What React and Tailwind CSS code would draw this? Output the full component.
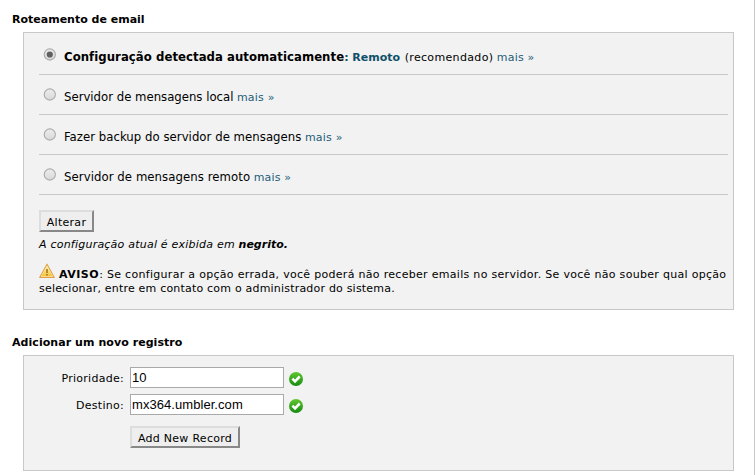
function Title({ children, className = "" }) {
  return <h2 className={`ml-3 h-[13px] text-[11px] leading-[13px] font-bold ${className}`}>{children}</h2>;
}

function Mais() {
  return (
    <a href="#" className="text-[11px] tracking-[0.2px] text-[#1d5d79]">mais »</a>
  );
}

function Radio({ checked }) {
  return (
    <svg width="13" height="13" viewBox="0 0 13 13" className="mt-[13px] mr-[7px] ml-[4px] shrink-0">
      <defs>
        <linearGradient id="radioFill" x1="0" y1="0" x2="0" y2="1">
          <stop offset="0" stopColor="#ececec" />
          <stop offset="1" stopColor="#d9d9d9" />
        </linearGradient>
      </defs>
      <circle cx="6.8" cy="6.5" r="5.6" fill="url(#radioFill)" stroke="#ababab" strokeWidth="1.1" />
      {checked && <circle cx="6.8" cy="6.5" r="3.1" fill="#606060" />}
    </svg>
  );
}

function Option({ checked, children }) {
  return (
    <label className="flex h-10 border-b border-[#c8c8c8]">
      <Radio checked={checked} />
      <span className="mt-[13px] ml-[1px] h-[18px] text-[11px] leading-[18px] whitespace-nowrap">{children}</span>
    </label>
  );
}

function OptionText({ children, className = "" }) {
  return <span className={`font-['DejaVu_Sans_Condensed','DejaVu_Sans',sans-serif] text-[13px] ${className}`}>{children}</span>;
}

function Btn({ children, className = "" }) {
  return (
    <button
      className={`block h-[22px] border-2 border-t-[#dddddd] border-r-[#888888] border-b-[#888888] border-l-[#dddddd] bg-[#eeeeee] pt-[3px] text-center text-[11px] leading-[15px] tracking-[0.28px] ${className}`}
    >
      {children}
    </button>
  );
}

function Warning() {
  return (
    <svg width="16" height="16" viewBox="0 0 16 16" className="mr-1 inline-block align-[-1px]">
      <defs>
        <linearGradient id="warnFill" x1="0" y1="0" x2="0" y2="1">
          <stop offset="0" stopColor="#fff0a0" />
          <stop offset="1" stopColor="#f3c33a" />
        </linearGradient>
      </defs>
      <path d="M8 1.2 15.3 14.4H.7Z" fill="#fff6cf" stroke="#dfa045" strokeWidth="1.1" strokeLinejoin="round" />
      <path d="M8 3.3 13.6 13.2H2.4Z" fill="url(#warnFill)" />
      <path d="M7.2 6h1.6v4H7.2zM7.2 11h1.6v1.4H7.2z" fill="#a8741c" />
    </svg>
  );
}

function Valid() {
  return (
    <svg width="14" height="14" viewBox="0 0 14 14" className="mt-[5px] ml-[5px] shrink-0">
      <defs>
        <linearGradient id="validFill" x1="0" y1="0" x2="0" y2="1">
          <stop offset="0" stopColor="#62c82e" />
          <stop offset="1" stopColor="#158a12" />
        </linearGradient>
      </defs>
      <circle cx="7" cy="7" r="7" fill="url(#validFill)" />
      <path d="M3.4 6.7 6 9.3 10.7 4.5" fill="none" stroke="#fff" strokeWidth="2.6" />
    </svg>
  );
}

function Field({ label, value }) {
  return (
    <div className="flex h-[21px]">
      <label className="mt-[3px] w-[100px] text-right text-[11px] leading-[18px] tracking-[0.28px]">{label}</label>
      <input
        defaultValue={value}
        className="ml-[6px] h-[21px] w-[154px] border border-[#a9a9a9] bg-white px-[1px] pb-[1px] font-['Liberation_Sans',Arial,sans-serif] text-[13px] leading-[18px] tracking-[0.06px] outline-none"
      />
      <Valid />
    </div>
  );
}

export default function App() {
  return (
    <div className="h-[475px] w-[755px] overflow-hidden border-r border-[#c8c8c8] bg-white pt-[13px] font-['DejaVu_Sans',Verdana,sans-serif] text-black">
      <Title>Roteamento de email</Title>

      <section className="mt-[6px] ml-[23px] h-[278px] w-[711px] border border-[#c8c8c8] bg-[#f2f2f2] pt-[2px] pr-[5px] pl-[15px]">
        <Option checked>
          <OptionText className="font-bold tracking-[0.05px]">Configuração detectada automaticamente</OptionText>
          <b className="text-[#0f5068]">: Remoto</b>{" "}
          <span className="ml-[1px] tracking-[0.34px]">(recomendado)</span> <Mais />
        </Option>
        <Option>
          <OptionText>Servidor de mensagens local</OptionText> <Mais />
        </Option>
        <Option>
          <OptionText className="tracking-[0.04px]">Fazer backup do servidor de mensagens</OptionText> <Mais />
        </Option>
        <Option>
          <OptionText className="tracking-[0.07px]">Servidor de mensagens remoto</OptionText> <Mais />
        </Option>

        <Btn className="mt-[15px] w-[55px]">Alterar</Btn>
        <p className="mt-[6px] h-[14px] text-[11px] leading-[14px] tracking-[0.22px] italic">
          A configuração atual é exibida em <b className="tracking-[0px]">negrito.</b>
        </p>

        <div className="mt-[11px] text-[11px] leading-[13px] whitespace-nowrap">
          <p className="h-[18px] leading-[18px] tracking-[0.3px]">
            <Warning />
            <b className="tracking-[0.5px]">AVISO</b>: Se configurar a opção errada, você poderá não receber emails no servidor. Se você não souber qual opção
          </p>
          <p className="pt-[1px] tracking-[0.2px]">selecionar, entre em contato com o administrador do sistema.</p>
        </div>
      </section>

      <Title className="mt-[26px] tracking-[0.06px]">Adicionar um novo registro</Title>

      <section className="mt-[6px] ml-[23px] flex h-[116px] w-[711px] flex-col border border-[#c8c8c8] bg-[#f2f2f2] pt-[11px]">
        <Field label="Prioridade:" value="10" />
        <div className="h-[6px]" />
        <Field label="Destino:" value="mx364.umbler.com" />
        <Btn className="mt-[11px] ml-[106px] w-[110px]">Add New Record</Btn>
      </section>
    </div>
  );
}
